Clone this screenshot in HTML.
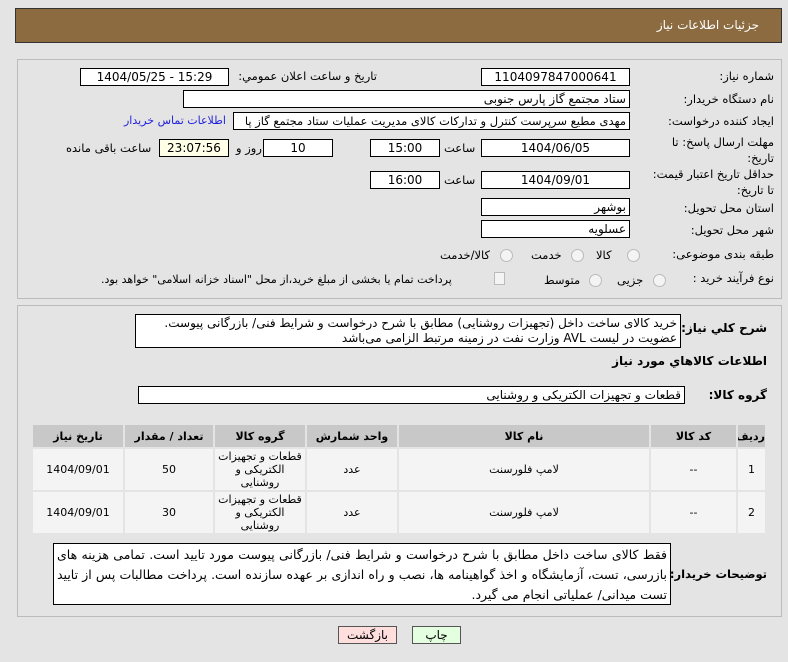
<!DOCTYPE html>
<html><head><meta charset="utf-8"><style>
body{margin:0;width:788px;height:662px;background:#e4e4e4;font-family:"DejaVu Sans","Liberation Sans",sans-serif;font-size:11px;color:#000;position:relative;overflow:hidden}
.a{position:absolute}
.hdr{left:15px;top:8px;width:767px;height:35px;background:#8b6b3f;border:1px solid #333;box-sizing:border-box}
.hdr span{position:absolute;right:22px;top:9px;color:#fff;font-size:12px}
.pnl{border:1px solid #bbb;background:#e4e4e4;box-sizing:border-box}
.box{position:absolute;background:#fff;border:1px solid #000;box-sizing:border-box;height:18px;line-height:16px;text-align:center;font-size:12px;white-space:nowrap;overflow:hidden}
.r{text-align:right;padding-right:3px;direction:rtl}
.lb{position:absolute;white-space:nowrap;direction:rtl;font-size:11.5px;z-index:2}
.rad{position:absolute;width:11px;height:11px;border:1px solid #bbb;border-radius:50%;background:#f4f4f4}
table{border-collapse:separate;border-spacing:2px;background:#e4e4e4;position:absolute;table-layout:fixed}
td,th{text-align:center;font-size:11px;padding:0;overflow:hidden}
th{background:#c8c8c8;height:22px;font-weight:bold}
td{background:#f4f4f4;height:41px;line-height:13px}
.ta{position:absolute;background:#fff;border:1px solid #000;box-sizing:border-box;direction:rtl;text-align:right;font-size:11px;padding:0 3px}
.btn{position:absolute;height:18px;border:1px solid #555;box-sizing:border-box;text-align:center;line-height:16px;font-size:12px}
</style></head><body>
<div class="a hdr"><span>جزئیات اطلاعات نیاز</span></div>
<div class="a pnl" style="left:17px;top:59px;width:765px;height:240px"></div>

<div class="lb" style="right:14px;top:69px">شماره نیاز:</div>
<div class="box" style="left:481px;top:68px;width:149px">1104097847000641</div>
<div class="lb" style="right:411px;top:69px">تاریخ و ساعت اعلان عمومي:</div>
<div class="box" style="left:80px;top:68px;width:149px">1404/05/25 - 15:29</div>

<div class="lb" style="right:14px;top:92px">نام دستگاه خریدار:</div>
<div class="box r" style="left:183px;top:90px;width:447px">ستاد مجتمع گاز پارس جنوبی</div>

<div class="lb" style="right:14px;top:114px">ایجاد کننده درخواست:</div>
<div class="box r" style="left:233px;top:112px;width:397px;font-size:11.5px">مهدی مطیع سرپرست کنترل و تدارکات کالای مدیریت عملیات ستاد مجتمع گاز پا</div>
<div class="lb" style="left:124px;top:114px;color:#2222dd;font-size:11px">اطلاعات تماس خریدار</div>

<div class="lb" style="right:14px;top:134px;line-height:16px">مهلت ارسال پاسخ: تا<br>تاریخ:</div>
<div class="box" style="left:481px;top:139px;width:149px">1404/06/05</div>
<div class="lb" style="left:444px;top:141px">ساعت</div>
<div class="box" style="left:370px;top:139px;width:70px">15:00</div>
<div class="box" style="left:263px;top:139px;width:70px">10</div>
<div class="lb" style="left:236px;top:141px">روز و</div>
<div class="box" style="left:159px;top:139px;width:70px;background:#ffffe8">23:07:56</div>
<div class="lb" style="left:66px;top:141px">ساعت باقی مانده</div>

<div class="lb" style="right:14px;top:166px;line-height:16px">حداقل تاریخ اعتبار قیمت:<br>تا تاریخ:</div>
<div class="box" style="left:481px;top:171px;width:149px">1404/09/01</div>
<div class="lb" style="left:444px;top:173px">ساعت</div>
<div class="box" style="left:370px;top:171px;width:70px">16:00</div>

<div class="lb" style="right:14px;top:201px">استان محل تحویل:</div>
<div class="box r" style="left:481px;top:198px;width:149px">بوشهر</div>
<div class="lb" style="right:14px;top:223px">شهر محل تحویل:</div>
<div class="box r" style="left:481px;top:220px;width:149px">عسلویه</div>

<div class="lb" style="right:14px;top:247px">طبقه بندی موضوعی:</div>
<div class="rad" style="left:627px;top:249px"></div><div class="lb" style="left:596px;top:248px">کالا</div>
<div class="rad" style="left:571px;top:249px"></div><div class="lb" style="left:531px;top:248px">خدمت</div>
<div class="rad" style="left:500px;top:249px"></div><div class="lb" style="left:440px;top:248px">کالا/خدمت</div>

<div class="lb" style="right:14px;top:271px">نوع فرآیند خرید :</div>
<div class="rad" style="left:653px;top:274px"></div><div class="lb" style="left:617px;top:273px">جزیی</div>
<div class="rad" style="left:589px;top:274px"></div><div class="lb" style="left:544px;top:273px">متوسط</div>
<div class="a" style="left:494px;top:272px;width:9px;height:11px;border:1px solid #bbb;background:#f4f4f4"></div>
<div class="lb" style="left:101px;top:273px;font-size:11px">پرداخت تمام یا بخشی از مبلغ خرید،از محل "اسناد خزانه اسلامی" خواهد بود.</div>

<div class="a pnl" style="left:17px;top:305px;width:765px;height:312px"></div>
<div class="lb" style="right:21px;top:321px;font-weight:bold;font-size:12px">شرح کلي نیاز:</div>
<div class="ta" style="left:135px;top:314px;width:546px;height:34px;line-height:15px;padding-top:1px;font-size:12px;white-space:nowrap;overflow:hidden">خرید کالای ساخت داخل (تجهیزات روشنایی) مطابق با شرح درخواست و شرایط فنی/ بازرگانی پیوست.<br>عضویت در لیست AVL وزارت نفت در زمینه مرتبط الزامی می‌باشد</div>
<div class="lb" style="right:21px;top:354px;font-weight:bold;font-size:12px">اطلاعات کالاهاي مورد نیاز</div>
<div class="lb" style="right:21px;top:388px;font-weight:bold;font-size:12px">گروه کالا:</div>
<div class="box r" style="left:138px;top:386px;width:547px">قطعات و تجهیزات الکتریکی و روشنایی</div>

<table style="left:31px;top:423px;width:736px;direction:rtl">
<colgroup><col style="width:27px"><col style="width:85px"><col style="width:250px"><col style="width:90px"><col style="width:90px"><col style="width:88px"><col></colgroup>
<tr><th>ردیف</th><th>کد کالا</th><th>نام کالا</th><th>واحد شمارش</th><th>گروه کالا</th><th>تعداد / مقدار</th><th>تاریخ نیاز</th></tr>
<tr><td>1</td><td>--</td><td>لامپ فلورسنت</td><td>عدد</td><td style="white-space:nowrap">قطعات و تجهیزات<br>الکتریکی و<br>روشنایی</td><td>50</td><td>1404/09/01</td></tr>
<tr><td>2</td><td>--</td><td>لامپ فلورسنت</td><td>عدد</td><td style="white-space:nowrap">قطعات و تجهیزات<br>الکتریکی و<br>روشنایی</td><td>30</td><td>1404/09/01</td></tr>
</table>

<div class="lb" style="right:21px;top:567px;font-weight:bold;font-size:11.5px">توضیحات خریدار:</div>
<div class="ta" style="left:53px;top:543px;width:618px;height:62px;line-height:20px;padding-top:1px;font-size:12.5px;text-align:justify;text-align-last:right">فقط کالای ساخت داخل مطابق با شرح درخواست و شرایط فنی/ بازرگانی پیوست مورد تایید است. تمامی هزینه های بازرسی، تست، آزمایشگاه و اخذ گواهینامه ها، نصب و راه اندازی بر عهده سازنده است. پرداخت مطالبات پس از تایید تست میدانی/ عملیاتی انجام می گیرد.</div>

<div class="btn" style="left:338px;top:626px;width:59px;background:#ffdede">بازگشت</div>
<div class="btn" style="left:412px;top:626px;width:49px;background:#e4ffe0">چاپ</div>
</body></html>
